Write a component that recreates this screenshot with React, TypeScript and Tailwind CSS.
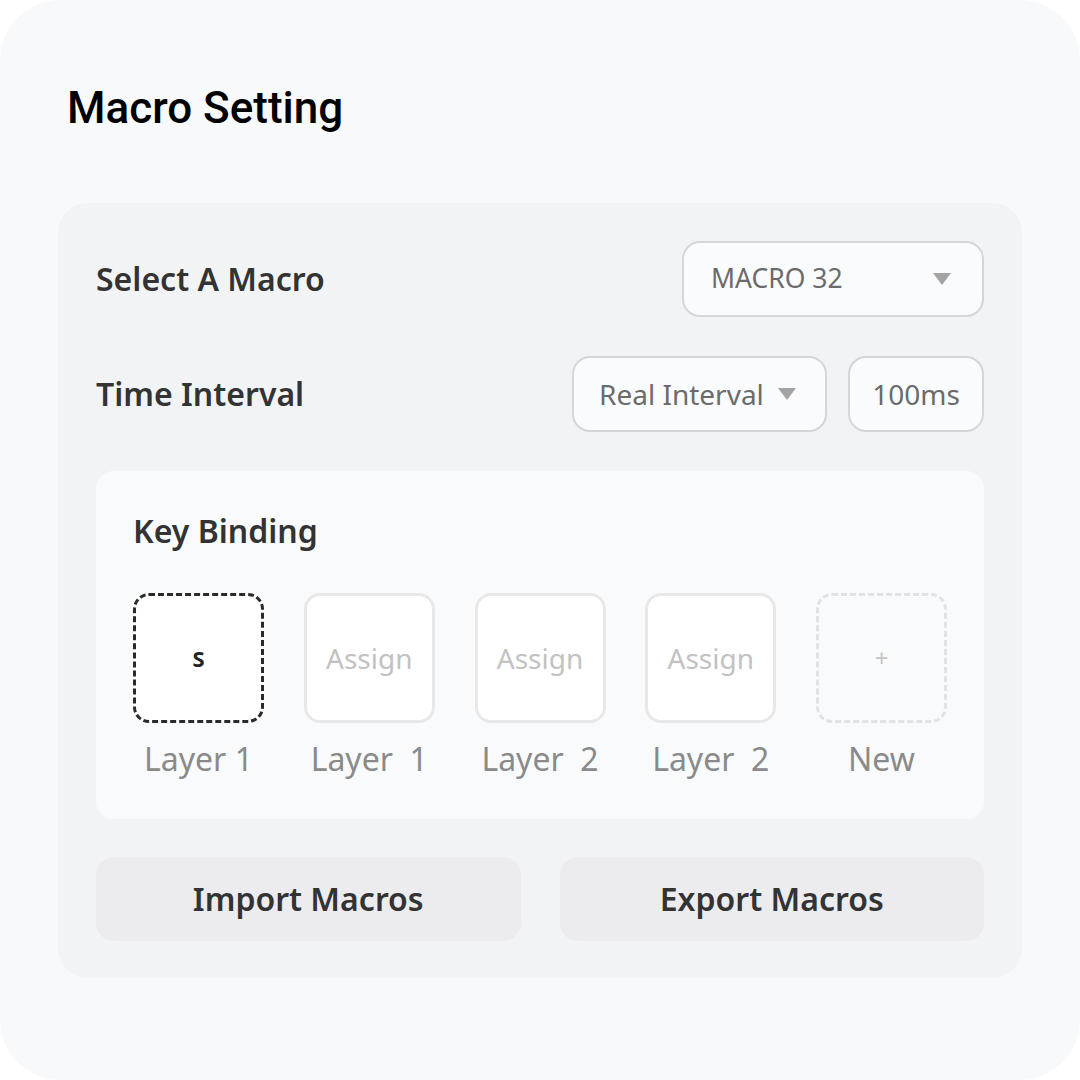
import { ReactNode } from 'react';

const body = { fontFamily: '"Noto Sans", "Open Sans", sans-serif' };

function Caret() {
  return (
    <svg width="20" height="14" viewBox="0 0 20 14" className="shrink-0">
      <path d="M1 1 H19 L10 13 Z" fill="#a3a3a3" />
    </svg>
  );
}

function Field({ children, className }: { children: ReactNode; className: string }) {
  return (
    <div
      className={`flex h-[76px] items-center rounded-[18px] border-2 border-[#d6d6d6] bg-[#fafbfc] text-[#6b6b6b] ${className}`}
    >
      {children}
    </div>
  );
}

const slots = [
  { key: 'S', label: 'Layer 1', kind: 'active' },
  { key: 'Assign', label: 'Layer  1', kind: 'assign' },
  { key: 'Assign', label: 'Layer  2', kind: 'assign' },
  { key: 'Assign', label: 'Layer  2', kind: 'assign' },
  { key: '+', label: 'New', kind: 'new' },
];

export default function App() {
  return (
    <div className="h-[1080px] w-[1080px] bg-white" style={body}>
      <div className="h-full w-full rounded-[60px] bg-[#f8f9fb] px-[58px] pt-[82px]">
        <h1
          className="pl-[9px] text-[44px] font-medium leading-[52px] text-black"
          style={{ fontFamily: 'Roboto, "Liberation Sans", sans-serif' }}
        >
          Macro Setting
        </h1>

        <div className="mt-[69px] flex flex-col gap-[39px] rounded-[30px] bg-[#f2f3f5] px-[38px] pb-[37px] pt-[38px]">
          <div className="flex items-center justify-between">
            <span className="text-[32px] font-semibold text-[#333]">Select A Macro</span>
            <Field className="w-[302px] justify-between pl-[27px] pr-[30px] text-[26.5px]">
              <span>MACRO 32</span>
              <Caret />
            </Field>
          </div>

          <div className="flex items-center justify-between">
            <span className="text-[32px] font-semibold text-[#333]">Time Interval</span>
            <div className="flex gap-[21px]">
              <Field className="w-[255px] justify-between pl-[25px] pr-[28px] text-[28px]">
                <span>Real Interval</span>
                <Caret />
              </Field>
              <Field className="w-[136px] justify-center text-[28px]">
                <span>100ms</span>
              </Field>
            </div>
          </div>

          <div className="rounded-[18px] bg-[#f9fafb] px-[37px] pb-[38px] pt-[38px]">
            <div className="text-[32px] font-semibold leading-[44px] text-[#333]">Key Binding</div>
            <div className="mt-[40px] flex justify-between">
              {slots.map((s, i) => (
                <div key={i} className="flex w-[131px] flex-col items-center">
                  <div
                    className={`flex h-[130px] w-[131px] items-center justify-center rounded-[16px] ${
                      s.kind === 'active'
                        ? 'border-[3px] border-dashed border-[#2a2a2a] bg-white text-[22px] font-bold text-[#222]'
                        : s.kind === 'new'
                          ? 'border-[3px] border-dashed border-[#e2e2e2] bg-transparent text-[24px] text-[#c4c4c4]'
                          : 'border-[3px] border-[#e8e8e8] bg-white text-[28px] text-[#c2c2c2]'
                    }`}
                  >
                    {s.key}
                  </div>
                  <div className="mt-[14px] whitespace-pre text-[32px] leading-[44px] text-[#8a8a8a]">{s.label}</div>
                </div>
              ))}
            </div>
          </div>

          <div className="-mt-px flex gap-[39px]">
            <button className="h-[84px] flex-1 rounded-[18px] bg-[#ececee] text-[32px] font-semibold text-[#333]">
              Import Macros
            </button>
            <button className="h-[84px] flex-1 rounded-[18px] bg-[#ececee] text-[32px] font-semibold text-[#333]">
              Export Macros
            </button>
          </div>
        </div>
      </div>
    </div>
  );
}
